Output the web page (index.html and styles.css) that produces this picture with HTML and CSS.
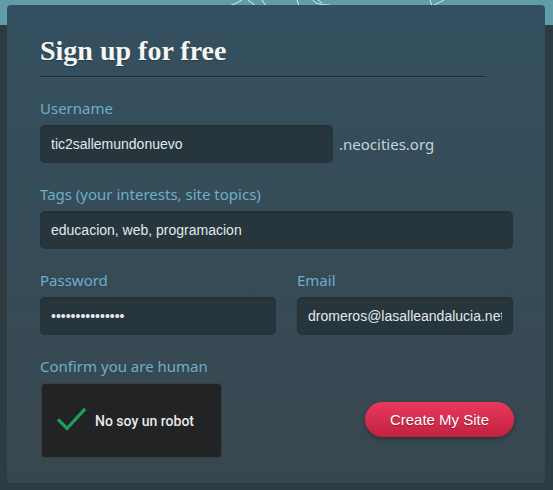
FILE: index.html
```html
<!DOCTYPE html>
<html lang="en">
<head>
<meta charset="utf-8">
<title>Sign up for free</title>
<link rel="stylesheet" href="styles.css">
</head>
<body>
<main class="card">
  <h1 class="title">Sign up for free</h1>
  <form class="form" onsubmit="return false">
    <div class="field">
      <label class="label" for="username">Username</label>
      <div class="user-row">
        <input class="input input-user" id="username" type="text" value="tic2sallemundonuevo">
        <span class="domain">.neocities.org</span>
      </div>
    </div>
    <div class="field">
      <label class="label" for="tags">Tags (your interests, site topics)</label>
      <input class="input" id="tags" type="text" value="educacion, web, programacion">
    </div>
    <div class="field split">
      <div class="col">
        <label class="label" for="password">Password</label>
        <input class="input" id="password" type="password" value="abcdefghijklmno">
      </div>
      <div class="col">
        <label class="label" for="email">Email</label>
        <input class="input" id="email" type="text" value="dromeros@lasalleandalucia.net">
      </div>
    </div>
    <div class="field last">
      <span class="label">Confirm you are human</span>
      <div class="human-row">
        <div class="captcha">
          <svg class="check" width="30" height="24" viewBox="0 0 30 24" aria-hidden="true">
            <path d="M2 12.5 L10 20.5 L27 2" fill="none" stroke="#1f9e58" stroke-width="3.2" stroke-linecap="square"/>
          </svg>
          <span class="captcha-text">No soy un robot</span>
        </div>
        <button class="btn" type="submit">Create My Site</button>
      </div>
    </div>
  </form>
</main>
</body>
</html>
```
FILE: styles.css
```css
html, body {
  height: 100%;
}
body {
  margin: 0;
  background:
    url("data:image/svg+xml,%3Csvg xmlns='http://www.w3.org/2000/svg' width='553' height='25'%3E%3Cg fill='none' stroke='%23d6e8ec' stroke-width='1'%3E%3Cpath d='M242 0 Q236 4 226 7'/%3E%3Cpath d='M248 0 L256 6'/%3E%3Cpath d='M262 0 L266 6'/%3E%3Cpath d='M313 0 Q315 5 330 5'/%3E%3Cpath d='M318 0 L322 3'/%3E%3Cpath d='M430 0 L432 6'/%3E%3Cpath d='M432 6 Q438 3 444 0'/%3E%3Cpath d='M297 0 L299 6'/%3E%3C/g%3E%3C/svg%3E") no-repeat 0 0,
    linear-gradient(#619ca9 0, #619ca9 25px, #2d3c43 25px);
  font-family: "Noto Sans", sans-serif;
}
.card {
  margin: 5px 8px 0 7px;
  padding: 31px 32px 25px 33px;
  border-radius: 4px;
  background: linear-gradient(#345060, #38474f);
}
.title {
  margin: 0 28px 0 0;
  padding: 0 0 11px 0;
  font-family: "Liberation Serif", serif;
  font-weight: bold;
  font-size: 28px;
  line-height: 29px;
  color: #f6f6f4;
  text-shadow: 0 1px 1px rgba(0, 0, 0, 0.25);
  border-bottom: 1px solid #1e2a30;
  box-shadow: 0 1px 0 rgba(255, 255, 255, 0.06);
}
.form {
  margin-top: 21px;
  display: flex;
  flex-direction: column;
  gap: 21px;
}
.field {
  display: flex;
  flex-direction: column;
  gap: 7px;
}
.label {
  font-size: 15px;
  line-height: 20px;
  color: #6daecb;
}
.user-row {
  display: flex;
  align-items: center;
  gap: 6px;
}
.input {
  box-sizing: border-box;
  height: 38px;
  margin: 0;
  padding: 0 11px;
  border: none;
  border-radius: 5px;
  background: #27353c;
  box-shadow: inset 0 1px 2px rgba(0, 0, 0, 0.15);
  font-family: "Liberation Sans", Arial, sans-serif;
  font-size: 14px;
  color: #e3e9eb;
  outline: none;
  width: 100%;
}
.input-user {
  width: 293px;
  flex: none;
}
.domain {
  font-size: 15px;
  color: #c6d4da;
}
.split {
  display: grid;
  grid-template-columns: 236px 216px;
  column-gap: 21px;
}
.col {
  display: flex;
  flex-direction: column;
  gap: 7px;
}
.human-row {
  display: flex;
  align-items: center;
  justify-content: space-between;
}
.captcha {
  box-sizing: border-box;
  width: 181px;
  height: 75px;
  margin-left: 1px;
  display: flex;
  align-items: center;
  padding-left: 15px;
  gap: 8px;
  background: #222325;
  border: 1px solid #3b3d3f;
  border-radius: 4px;
}
.check {
  display: block;
  margin-top: -1px;
}
.captcha-text {
  font-family: Roboto, sans-serif;
  font-weight: 500;
  font-size: 14px;
  color: #e8e8e8;
}
.btn {
  width: 149px;
  height: 35px;
  margin: 0 -1px 2px 0;
  padding: 0;
  border: none;
  border-radius: 18px;
  background: linear-gradient(#e8395c, #c2213f);
  box-shadow: 0 2px 4px rgba(0, 0, 0, 0.3);
  font-family: "Liberation Sans", Arial, sans-serif;
  font-size: 15px;
  color: #ffffff;
  text-shadow: 0 1px 1px rgba(0, 0, 0, 0.3);
  cursor: pointer;
}
```
